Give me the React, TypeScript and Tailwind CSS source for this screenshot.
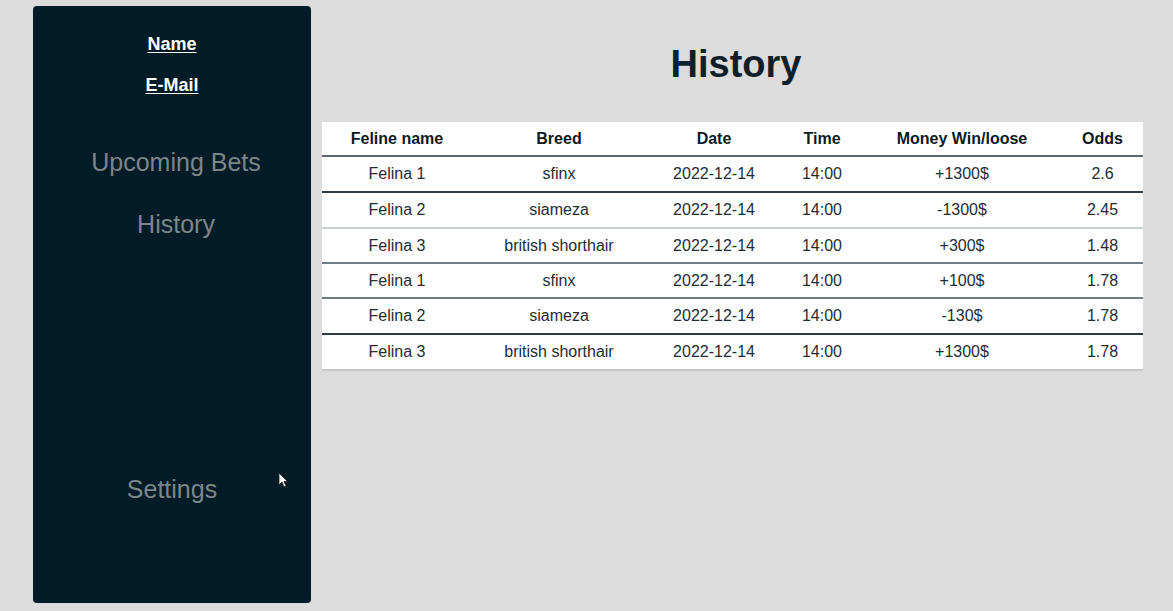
const rows = [
  { name: "Felina 1", breed: "sfinx", date: "2022-12-14", time: "14:00", money: "+1300$", odds: "2.6", line: "border-[#2c3c44] h-[36px]" },
  { name: "Felina 2", breed: "siameza", date: "2022-12-14", time: "14:00", money: "-1300$", odds: "2.45", line: "border-[#c9ced1] h-[36px]" },
  { name: "Felina 3", breed: "british shorthair", date: "2022-12-14", time: "14:00", money: "+300$", odds: "1.48", line: "border-[#6f7e85] h-[35px]" },
  { name: "Felina 1", breed: "sfinx", date: "2022-12-14", time: "14:00", money: "+100$", odds: "1.78", line: "border-[#6f7e85] h-[35px]" },
  { name: "Felina 2", breed: "siameza", date: "2022-12-14", time: "14:00", money: "-130$", odds: "1.78", line: "border-[#2c3c44] h-[36px]" },
  { name: "Felina 3", breed: "british shorthair", date: "2022-12-14", time: "14:00", money: "+1300$", odds: "1.78", line: "border-[#c4c8cb] h-[36px]" },
];

const cols = "grid grid-cols-[150px_174px_136px_80px_200px_81px] text-center";

export default function App() {
  return (
    <div className="h-screen w-full bg-[#dcdcdc] flex pt-[6px] pb-[8px] pl-[33px] font-['Liberation_Sans',Arial,sans-serif]">
      {/* sidebar */}
      <aside className="relative w-[278px] h-full bg-[#011c26] rounded-[4px] flex flex-col items-center pt-[28px]">
        <a className="text-white font-bold text-[18px] leading-[21px] underline underline-offset-2">Name</a>
        <a className="mt-[20px] text-white font-bold text-[18px] leading-[21px] underline underline-offset-2">E-Mail</a>
        <div className="mt-[52px] pl-[8px] text-[#7f8589] text-[25px] leading-[28px]">Upcoming Bets</div>
        <div className="mt-[34px] pl-[8px] text-[#7f8589] text-[25px] leading-[28px]">History</div>
        <div className="mt-[237px] text-[#7f8589] text-[25px] leading-[28px]">Settings</div>
        <svg className="absolute left-[245px] top-[466px]" width="10" height="16" viewBox="0 0 10 16">
          <path d="M1 1 L1 13 L4 10 L6 15 L8 14 L6 9.5 L9.5 9.5 Z" fill="#fff" stroke="#222" strokeWidth="0.8" />
        </svg>
      </aside>

      {/* main */}
      <main className="ml-[11px] w-[821px] flex flex-col">
        <h1 className="mt-[36px] pl-[7px] text-center text-[38px] leading-[44px] font-bold text-[#0c1f2a]">History</h1>
        <div className="mt-[36px] bg-white">
          <div className={`${cols} h-[35px] items-center border-b-2 border-[#5c6b72] font-bold text-[16px] text-[#0a1a22]`}>
            <div>Feline name</div>
            <div>Breed</div>
            <div>Date</div>
            <div>Time</div>
            <div>Money Win/loose</div>
            <div>Odds</div>
          </div>
          {rows.map((r, i) => (
            <div key={i} className={`${cols} items-center border-b-2 ${r.line} text-[16px] text-[#1e2d35]`}>
              <div>{r.name}</div>
              <div>{r.breed}</div>
              <div>{r.date}</div>
              <div>{r.time}</div>
              <div>{r.money}</div>
              <div>{r.odds}</div>
            </div>
          ))}
        </div>
      </main>
    </div>
  );
}
